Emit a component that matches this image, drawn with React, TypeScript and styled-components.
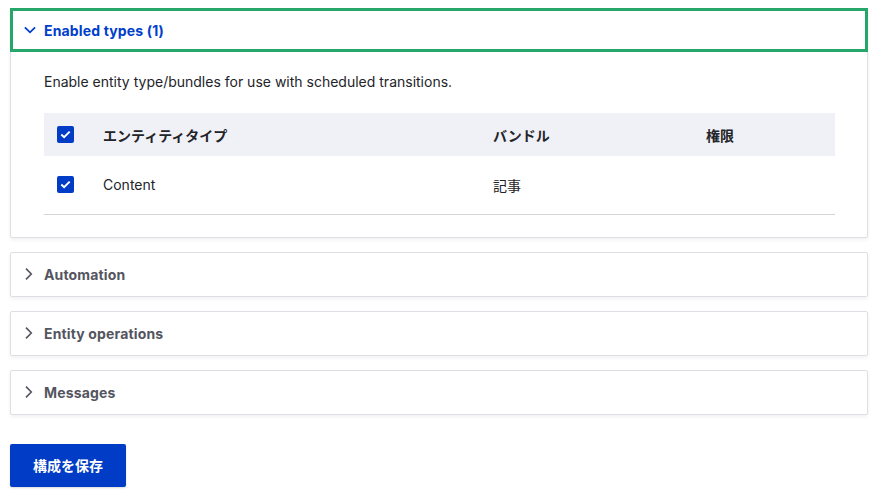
import React from "react";
import { createGlobalStyle, styled } from "styled-components";

const GlobalStyle = createGlobalStyle`
  body {
    margin: 0;
    background: #ffffff;
    font-family: Inter, "Noto Sans CJK JP", sans-serif;
    color: #232429;
  }
`;

const colors = {
  blue: "#003ecc",
  button: "#003cc5",
  text: "#232429",
  muted: "#545560",
  border: "#dedfe4",
  headBG: "#f0f1f6",
  focus: "#26a769",
};

const Page = styled.div`
  width: 858px;
  padding: 8px 14px 15px 10px;
  display: flex;
  flex-direction: column;
  gap: 14px;
`;

const Card = styled.div`
  border: 1px solid ${colors.border};
  border-radius: 2px;
  background: #fff;
  box-shadow: 0 2px 4px rgba(0, 0, 0, 0.06);
`;

const Summary = styled.div<{ $open?: boolean }>`
  display: flex;
  align-items: center;
  gap: 8px;
  padding-left: ${(p) => (p.$open ? "14px" : "13px")};
  font-size: 14px;
  letter-spacing: 0.15px;
  font-weight: 700;
  color: ${(p) => (p.$open ? colors.blue : colors.muted)};
  box-shadow: ${(p) => (p.$open ? `inset 0 0 0 3px ${colors.focus}` : "none")};
  margin: ${(p) => (p.$open ? "-1px -1px 0" : "0")};
  height: ${(p) => (p.$open ? "44px" : "43px")};
`;

const Chevron = ({ open }: { open?: boolean }) =>
  open ? (
    <svg width="12" height="12" viewBox="0 0 12 12">
      <path d="M0.9 3.3 L6 8.3 L11.1 3.3" fill="none" stroke={colors.blue} strokeWidth="1.8" />
    </svg>
  ) : (
    <svg width="12" height="12" viewBox="0 0 12 12">
      <path d="M2 0.6 L7.3 6 L2 11.4" fill="none" stroke="#545560" strokeWidth="1.6" />
    </svg>
  );

const Body = styled.div`
  padding: 21px 32px 22px 33px;
`;

const Description = styled.p`
  margin: 0 0 22px;
  font-size: 14px;
  line-height: 18px;
`;

const Table = styled.table`
  width: 100%;
  border-collapse: collapse;
  font-size: 14px;
`;

const HeadRow = styled.tr`
  background: ${colors.headBG};
  height: 43px;
`;

const Row = styled.tr`
  height: 58px;
  border-bottom: 1px solid #d4d4d8;
`;

const Th = styled.th<{ $w?: number }>`
  text-align: left;
  font-weight: 700;
  padding: 0;
  width: ${(p) => (p.$w ? `${p.$w}px` : "auto")};
`;

const Td = styled.td<{ $w?: number }>`
  padding: 0;
  width: ${(p) => (p.$w ? `${p.$w}px` : "auto")};
`;

const CheckCell = styled.span`
  display: flex;
  padding-left: 13px;
  align-items: center;
`;

const Box = styled.span`
  width: 17px;
  height: 17px;
  border-radius: 2px;
  background: ${colors.button};
  display: flex;
  align-items: center;
  justify-content: center;
`;

const Check = () => (
  <CheckCell>
    <Box>
      <svg width="11" height="9" viewBox="0 0 11 9">
        <path d="M1.3 4.6 L4.1 7.2 L9.7 1.6" fill="none" stroke="#fff" strokeWidth="2" />
      </svg>
    </Box>
  </CheckCell>
);

const SaveButton = styled.button`
  margin-top: 15px;
  align-self: flex-start;
  width: 116px;
  height: 43px;
  border: none;
  border-radius: 2px;
  background: ${colors.button};
  color: #fff;
  font-family: Inter, "Noto Sans CJK JP", sans-serif;
  font-size: 14px;
  font-weight: 700;
  box-shadow: 0 1px 2px rgba(0, 0, 0, 0.15);
`;

const collapsed = ["Automation", "Entity operations", "Messages"];

export default function App() {
  return (
    <>
      <GlobalStyle />
      <Page>
        <Card>
          <Summary $open>
            <Chevron open />
            Enabled types (1)
          </Summary>
          <Body>
            <Description>Enable entity type/bundles for use with scheduled transitions.</Description>
            <Table>
              <thead>
                <HeadRow>
                  <Th $w={59}>
                    <Check />
                  </Th>
                  <Th $w={390}>エンティティタイプ</Th>
                  <Th $w={213}>バンドル</Th>
                  <Th>権限</Th>
                </HeadRow>
              </thead>
              <tbody>
                <Row>
                  <Td>
                    <Check />
                  </Td>
                  <Td>Content</Td>
                  <Td>記事</Td>
                  <Td />
                </Row>
              </tbody>
            </Table>
          </Body>
        </Card>
        {collapsed.map((title) => (
          <Card key={title}>
            <Summary>
              <Chevron />
              {title}
            </Summary>
          </Card>
        ))}
        <SaveButton>構成を保存</SaveButton>
      </Page>
    </>
  );
}
